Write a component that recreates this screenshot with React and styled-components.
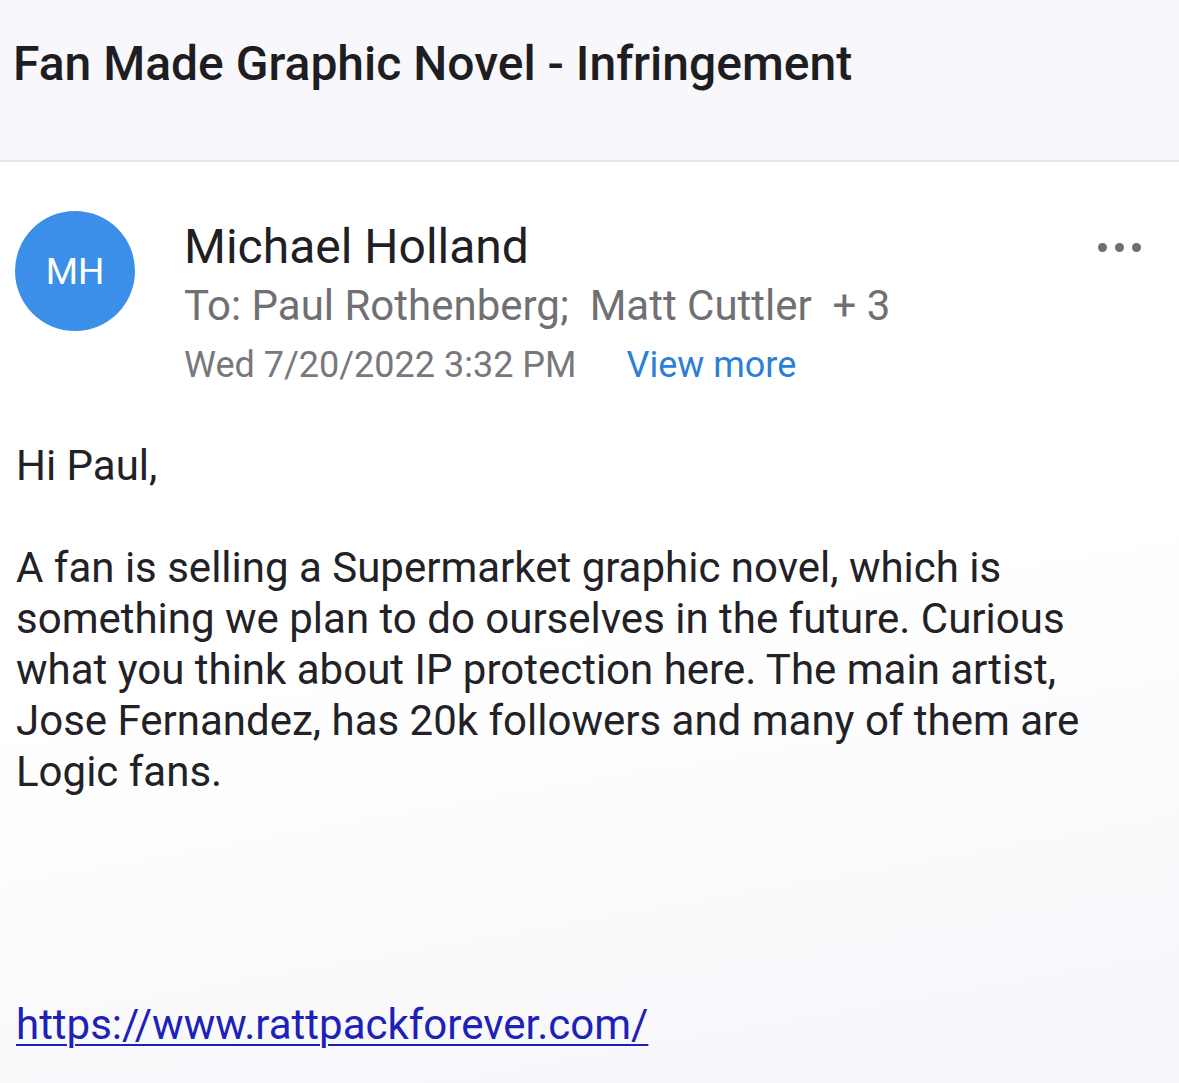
import React from 'react';
import styled, { createGlobalStyle } from 'styled-components';

const GlobalStyle = createGlobalStyle`
  html, body {
    margin: 0;
    padding: 0;
    background: #ffffff;
  }
  body {
    font-family: Roboto, "Noto Sans", sans-serif;
  }
`;

const Page = styled.div`
  width: 1179px;
  height: 1083px;
  overflow: hidden;
  background: linear-gradient(170deg, #ffffff 55%, #f6f6fb 100%);
`;

const Header = styled.header`
  height: 162px;
  background: #f7f7fc;
  border-bottom: 2px solid #e3e3e8;
  display: flex;
  align-items: center;
  padding: 0 13px;
  padding-bottom: 34px;
  box-sizing: border-box;
`;

const Subject = styled.h1`
  margin: 0;
  font-size: 48px;
  font-weight: 500;
  color: #1e1e22;
`;

const Sender = styled.section`
  display: flex;
  align-items: flex-start;
  padding: 49px 38px 0 15px;
`;

const Avatar = styled.div`
  width: 120px;
  height: 120px;
  border-radius: 50%;
  background: #3b8fe8;
  color: #ffffff;
  font-size: 37px;
  display: flex;
  align-items: center;
  justify-content: center;
  flex-shrink: 0;
  margin-right: 49px;
`;

const Meta = styled.div`
  flex: 1;
  display: flex;
  flex-direction: column;
`;

const Name = styled.div`
  font-size: 48px;
  color: #202024;
  line-height: 56px;
  margin-top: 8px;
`;

const Recipients = styled.div`
  font-size: 42px;
  color: #707074;
  line-height: 52px;
  margin-top: 5px;
  white-space: pre;
`;

const DateRow = styled.div`
  display: flex;
  gap: 50px;
  font-size: 36px;
  line-height: 44px;
  margin-top: 11px;
`;

const DateText = styled.span`
  color: #78787c;
`;

const ViewMore = styled.span`
  color: #2b7fd6;
`;

const More = styled.div`
  display: flex;
  gap: 8px;
  margin-top: 32px;
`;

const Dot = styled.span`
  width: 9px;
  height: 9px;
  border-radius: 50%;
  background: #6e6e74;
`;

const Body = styled.main`
  padding: 53px 16px 0;
  max-width: 1085px;
  color: #222226;
  font-size: 42px;
  line-height: 51px;
`;

const Para = styled.p`
  margin: 0 0 ${p => p.$gap}px;
`;

const Link = styled.a`
  color: #1c22b8;
  text-decoration: underline;
  text-decoration-thickness: 2px;
  text-underline-offset: 5px;
`;

export default function App() {
  return (
    <Page>
      <GlobalStyle />
      <Header>
        <Subject>Fan Made Graphic Novel - Infringement</Subject>
      </Header>
      <Sender>
        <Avatar>MH</Avatar>
        <Meta>
          <Name>Michael Holland</Name>
          <Recipients>{'To: Paul Rothenberg;  Matt Cuttler  + 3'}</Recipients>
          <DateRow>
            <DateText>Wed 7/20/2022 3:32 PM</DateText>
            <ViewMore>View more</ViewMore>
          </DateRow>
        </Meta>
        <More>
          <Dot />
          <Dot />
          <Dot />
        </More>
      </Sender>
      <Body>
        <Para $gap={51}>Hi Paul,</Para>
        <Para $gap={202}>
          A fan is selling a Supermarket graphic novel, which is something we plan to do
          ourselves in the future. Curious what you think about IP protection here. The main
          artist, Jose Fernandez, has 20k followers and many of them are Logic fans.
        </Para>
        <Para $gap={0}>
          <Link href="#">https://www.rattpackforever.com/</Link>
        </Para>
      </Body>
    </Page>
  );
}
